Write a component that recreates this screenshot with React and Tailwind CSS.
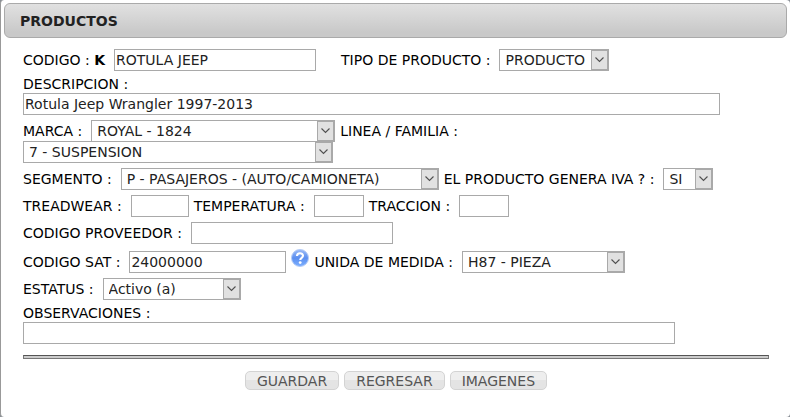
import React from 'react';

const box = "h-[22px] border border-[#a9a9a9] bg-white text-[#222222]";

function Field({ id, label, children }) {
  return (
    <div className="flex items-center gap-[9px]">
      <label htmlFor={id} className="whitespace-nowrap">{label}</label>
      {children}
    </div>
  );
}

function TextBox({ id, value = "", className }) {
  return <input id={id} type="text" defaultValue={value} className={`${box} px-px ${className}`} />;
}

function SelectBox({ id, option, className }) {
  return (
    <div className={`relative ${className}`}>
      <select id={id} className={`${box} block w-full appearance-none pl-[5px]`}>
        <option>{option}</option>
      </select>
      <span className="pointer-events-none absolute inset-y-0 right-0 flex w-[18px] items-center justify-center border-2 border-l border-[#a9a9a9] bg-[#e1e1e1]">
        <svg width="9" height="6" viewBox="0 0 9 6" fill="none" stroke="#505050" strokeWidth="1.1">
          <path d="M0.5 0.5L4.5 4.5L8.5 0.5" />
        </svg>
      </span>
    </div>
  );
}

function HelpIcon() {
  return (
    <svg width="18" height="18" viewBox="0 0 18 18">
      <defs>
        <linearGradient id="help" x1="0" y1="0" x2="0" y2="1">
          <stop offset="0" stopColor="#9dbcf6" />
          <stop offset="0.5" stopColor="#5c8ff0" />
          <stop offset="1" stopColor="#7db0ff" />
        </linearGradient>
      </defs>
      <circle cx="9" cy="9" r="8.5" fill="url(#help)" stroke="#b5ccf6" />
      <path d="M6 7C6 3.4 12 3.4 12 6.8C12 8.8 9.2 8.8 9.2 11" fill="none" stroke="#fff" strokeWidth="2.1" />
      <circle cx="9.2" cy="13.6" r="1.4" fill="#fff" />
    </svg>
  );
}

function ActionButton({ children }) {
  return (
    <button type="button" className="h-[19px] rounded-[5px] border border-[#d3d3d3] bg-linear-to-b from-[#eeeeee] from-50% to-[#e4e4e4] to-50% px-[11px] leading-4 text-[#555555]">
      {children}
    </button>
  );
}

function App() {
  return (
    <div className="bg-[#8a8f96]">
      <div className="min-h-screen rounded-[4px] border-l border-[#999999] bg-white px-[3px] pt-[3px] font-['DejaVu_Sans',Verdana,sans-serif] text-[14px] leading-4 text-black">
        <h1 className="rounded-md border border-[#aaaaaa] bg-linear-to-b from-[#e1e1e1] to-[#c9c9c9] to-85% px-[15px] pt-[9px] pb-2 font-bold text-[#222222]">
          PRODUCTOS
        </h1>

        <form className="flex flex-col gap-[5px] pt-[11px] pr-[18px] pl-[19px]">
          <div className="flex items-center gap-[25px]">
            <Field id="codigo" label={<>CODIGO : <b>K</b></>}>
              <TextBox id="codigo" value="ROTULA JEEP" className="w-[202px]" />
            </Field>
            <Field id="tipo" label="TIPO DE PRODUCTO :">
              <SelectBox id="tipo" option="PRODUCTO" className="w-[110px]" />
            </Field>
          </div>

          <div className="flex flex-col">
            <label htmlFor="descripcion" className="leading-[17px]">DESCRIPCION :</label>
            <TextBox id="descripcion" value="Rotula Jeep Wrangler 1997-2013" className="w-[697px] max-w-full" />
          </div>

          {/* Marca y linea comparten el borde */}
          <div className="flex flex-col">
            <div className="-mb-px flex items-center gap-[5px]">
              <Field id="marca" label="MARCA :">
                <SelectBox id="marca" option="ROYAL - 1824" className="w-[244px]" />
              </Field>
              <label htmlFor="linea">LINEA / FAMILIA :</label>
            </div>
            <SelectBox id="linea" option="7 - SUSPENSION" className="w-[310px]" />
          </div>

          <div className="flex items-center gap-[5px]">
            <Field id="segmento" label="SEGMENTO :">
              <SelectBox id="segmento" option="P - PASAJEROS - (AUTO/CAMIONETA)" className="w-[318px]" />
            </Field>
            <Field id="iva" label="EL PRODUCTO GENERA IVA ? :">
              <SelectBox id="iva" option="SI" className="w-[50px]" />
            </Field>
          </div>

          <div className="flex items-center gap-[5px]">
            <Field id="treadwear" label="TREADWEAR :">
              <TextBox id="treadwear" className="w-[58px]" />
            </Field>
            <Field id="temperatura" label="TEMPERATURA :">
              <TextBox id="temperatura" className="w-[50px]" />
            </Field>
            <Field id="traccion" label="TRACCION :">
              <TextBox id="traccion" className="w-[50px]" />
            </Field>
          </div>

          <Field id="proveedor" label="CODIGO PROVEEDOR :">
            <TextBox id="proveedor" className="w-[202px]" />
          </Field>

          <div className="flex min-h-6 items-end gap-[5px]">
            <Field id="sat" label="CODIGO SAT :">
              <TextBox id="sat" value="24000000" className="w-[157px]" />
            </Field>
            <a href="#ayuda" aria-label="Ayuda" className="self-start"><HelpIcon /></a>
            <Field id="unidad" label="UNIDA DE MEDIDA :">
              <SelectBox id="unidad" option="H87 - PIEZA" className="w-[163px]" />
            </Field>
          </div>

          <Field id="estatus" label="ESTATUS :">
            <SelectBox id="estatus" option="Activo (a)" className="w-[138px]" />
          </Field>

          <div className="flex flex-col">
            <label htmlFor="observaciones" className="leading-[17px]">OBSERVACIONES :</label>
            <TextBox id="observaciones" className="w-[652px] max-w-full" />
          </div>

          <hr className="mt-1.5 h-1 border border-[#777777] border-t-[#555555] bg-[#cccccc]" />

          <div className="flex justify-center gap-[5px] pt-[7px]">
            <ActionButton>GUARDAR</ActionButton>
            <ActionButton>REGRESAR</ActionButton>
            <ActionButton>IMAGENES</ActionButton>
          </div>
        </form>
      </div>
    </div>
  );
}

export default App;
